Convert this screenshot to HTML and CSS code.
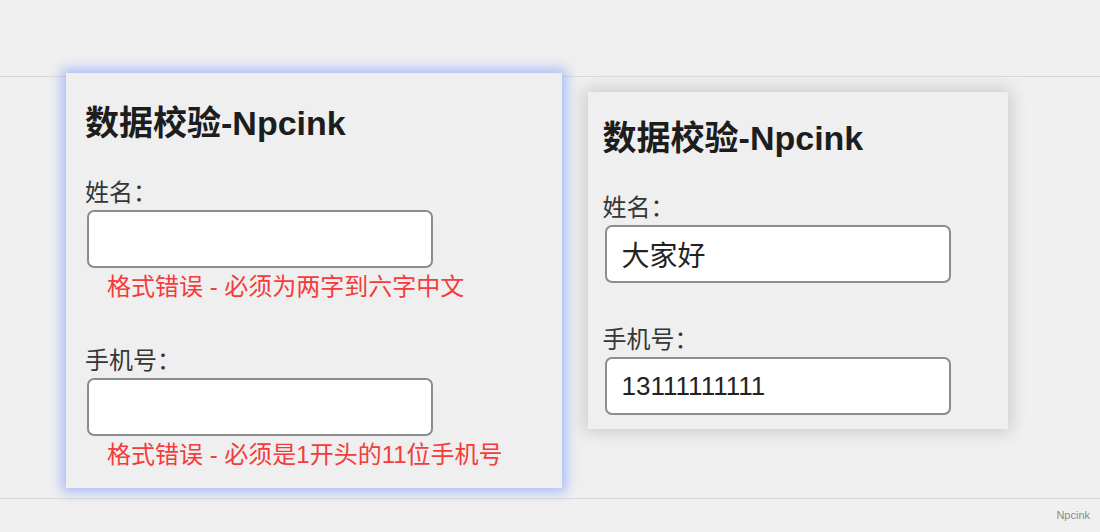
FILE: index.html
```html
<!DOCTYPE html>
<html lang="zh-CN">
<head>
<meta charset="utf-8">
<title>数据校验-Npcink</title>
<link rel="stylesheet" href="styles.css">
</head>
<body>
<div class="topbar"></div>
<main class="stage">
  <section class="card card--focus">
    <h2 class="card-title">数据校验-Npcink</h2>
    <div class="field">
      <label class="field-label">姓名：</label>
      <input class="field-input field-input--cjk" type="text" value="">
      <div class="field-error">格式错误 - 必须为两字到六字中文</div>
    </div>
    <div class="field">
      <label class="field-label">手机号：</label>
      <input class="field-input field-input--digits" type="text" value="">
      <div class="field-error">格式错误 - 必须是1开头的11位手机号</div>
    </div>
  </section>
  <section class="card card--raised">
    <h2 class="card-title">数据校验-Npcink</h2>
    <div class="field">
      <label class="field-label">姓名：</label>
      <input class="field-input field-input--cjk" type="text" value="大家好">
    </div>
    <div class="field">
      <label class="field-label">手机号：</label>
      <input class="field-input field-input--digits" type="text" value="13111111111">
    </div>
  </section>
</main>
<footer class="footer">Npcink</footer>
</body>
</html>
```
FILE: styles.css
```css
html, body {
  margin: 0;
  padding: 0;
}
body {
  background: #f0f0f0;
  font-family: "Liberation Sans", "Noto Sans CJK SC", sans-serif;
  color: #333;
  width: 1100px;
  height: 532px;
  overflow: hidden;
}
.topbar {
  height: 76px;
  border-bottom: 1px solid #d9d9d9;
}
.stage {
  display: flex;
  align-items: flex-start;
  gap: 26px;
  padding-left: 66px;
  margin-top: -4px;
  height: 425px;
  box-sizing: border-box;
}
.card {
  background: #efefef;
  padding: 26px 55px 12px 15px;
  flex: none;
}
.card--focus {
  border: 4px solid #efefef;
  box-shadow: 0 0 12px 4px rgba(105, 140, 255, 0.55);
}
.card--raised {
  margin-top: 19px;
  box-shadow: 0 0 16px 3px rgba(0, 0, 0, 0.16);
}
.card-title {
  margin: 0 0 35px 0;
  font-size: 34px;
  line-height: 40px;
  font-weight: 700;
  color: #1d1d1d;
  white-space: nowrap;
}
.field {
  margin-bottom: 42px;
}
.field:last-child {
  margin-bottom: 0;
}
.field-label {
  display: block;
  font-size: 24px;
  line-height: 30px;
  color: #363636;
  margin-bottom: 1px;
}
.field-input {
  display: block;
  margin: 2px;
  width: 346px;
  height: 58px;
  box-sizing: border-box;
  border: 2px solid #8c8c8c;
  border-radius: 7px;
  background: #fff;
  padding: 0 15px;
  font-family: "Liberation Sans", "Noto Sans CJK SC", sans-serif;
  color: #222;
  outline: none;
}
.field-input--cjk {
  font-size: 28px;
}
.field-input--digits {
  font-size: 26px;
}
.field-error {
  padding-left: 22px;
  font-size: 24px;
  line-height: 34px;
  color: #f53b3b;
  white-space: nowrap;
}
.footer {
  border-top: 1px solid #d9d9d9;
  height: 33px;
  box-sizing: border-box;
  text-align: right;
  padding-right: 10px;
  font-size: 11px;
  line-height: 33px;
  color: #8a8a8a;
}
```
